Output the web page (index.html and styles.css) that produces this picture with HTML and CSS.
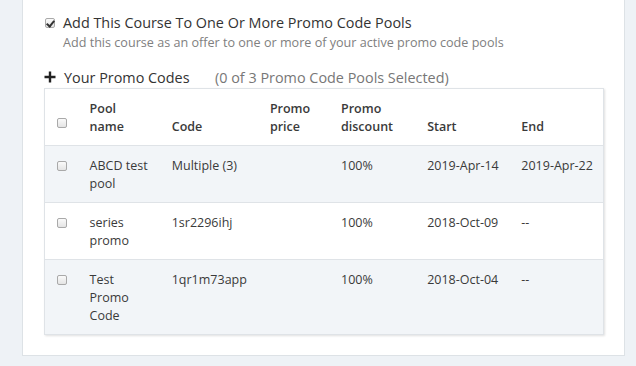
FILE: index.html
```html
<!DOCTYPE html>
<html lang="en">

<head>
  <meta charset="UTF-8">
  <meta name="viewport" content="width=device-width, initial-scale=1.0">
  <title>Promo Code Pools</title>
  <link rel="stylesheet" href="styles.css">
</head>

<body>
  <div class="panel">
    <!-- Opt-in -->
    <label class="opt-in">
      <input type="checkbox" class="check" checked>
      <span class="opt-title">Add This Course To One Or More Promo Code Pools</span>
    </label>
    <p class="opt-help">Add this course as an offer to one or more of your active promo code pools</p>

    <!-- Pool list -->
    <div class="pools-head">
      <svg class="plus" width="12" height="12" viewBox="0 0 12 12">
        <path d="M6 0.5V11.5M0.5 6H11.5" stroke="#222" stroke-width="2.4" fill="none" />
      </svg>
      <span class="pools-title">Your Promo Codes</span>
      <span class="pools-count">(0 of 3 Promo Code Pools Selected)</span>
    </div>

    <table class="pool-table">
      <colgroup>
        <col class="c-check">
        <col class="c-name">
        <col class="c-code">
        <col class="c-price">
        <col class="c-disc">
        <col class="c-start">
        <col class="c-end">
      </colgroup>
      <thead>
        <tr>
          <th class="cell-check"><input type="checkbox" class="check"></th>
          <th class="cell-name">Pool name</th>
          <th>Code</th>
          <th>Promo price</th>
          <th>Promo discount</th>
          <th>Start</th>
          <th>End</th>
        </tr>
      </thead>
      <tbody>
        <tr>
          <td class="cell-check"><input type="checkbox" class="check"></td>
          <td class="cell-name">ABCD test pool</td>
          <td>Multiple (3)</td>
          <td></td>
          <td>100%</td>
          <td>2019-Apr-14</td>
          <td>2019-Apr-22</td>
        </tr>
        <tr>
          <td class="cell-check"><input type="checkbox" class="check"></td>
          <td class="cell-name">series promo</td>
          <td>1sr2296ihj</td>
          <td></td>
          <td>100%</td>
          <td>2018-Oct-09</td>
          <td>--</td>
        </tr>
        <tr>
          <td class="cell-check"><input type="checkbox" class="check"></td>
          <td class="cell-name">Test Promo Code</td>
          <td>1qr1m73app</td>
          <td></td>
          <td>100%</td>
          <td>2018-Oct-04</td>
          <td>--</td>
        </tr>
      </tbody>
    </table>
  </div>
</body>

</html>
```

FILE: styles.css
```css
body {
  font-family: 'Open Sans', 'Noto Sans', sans-serif;
  margin: 0;
  background: #eef2f6;
  color: #333;
}

.panel {
  width: 560px;
  margin-left: 22px;
  padding: 13px 20px 20px 21px;
  background: white;
  border: 1px solid #dde2e6;
  border-top: none;
}

.check {
  appearance: none;
  -webkit-appearance: none;
  width: 10px;
  height: 10px;
  margin: 0;
  border: 1px solid #a9a9a9;
  border-radius: 2px;
  background: linear-gradient(#fafafa, #e4e4e4);
  position: relative;
}

.check:checked::after {
  content: '';
  position: absolute;
  left: 2px;
  top: 0px;
  width: 3px;
  height: 6px;
  border: solid #333;
  border-width: 0 2px 2px 0;
  transform: rotate(40deg);
}

.opt-in {
  display: flex;
  align-items: center;
  gap: 8px;
  padding-left: 1px;
}

.opt-title {
  font-size: 14.4px;
  line-height: 20px;
  color: #333;
}

.opt-help {
  margin: 1px 0 0 19px;
  font-size: 12.6px;
  line-height: 18px;
  color: #808080;
}

.pools-head {
  display: flex;
  align-items: center;
  margin-top: 14px;
  height: 22px;
  font-size: 14.4px;
}

.plus {
  margin-right: 8px;
}

.pools-title {
  color: #333;
  width: 151px;
}

.pools-count {
  color: #777;
}

.pool-table {
  width: 560px;
  table-layout: fixed;
  border-collapse: collapse;
  border: 1px solid #dfe3e7;
  box-shadow: 1px 1px 2px rgba(0, 0, 0, 0.12);
  font-size: 12.5px;
  line-height: 18px;
  color: #3a3a3a;
}

.c-check { width: 45px; }
.c-name { width: 82px; }
.c-code { width: 98px; }
.c-price { width: 71px; }
.c-disc { width: 86px; }
.c-start { width: 94px; }
.c-end { width: 82px; }

.pool-table th,
.pool-table td {
  padding: 11px 8px 9px 0;
  text-align: left;
  vertical-align: top;
}

.pool-table th {
  font-weight: 600;
  vertical-align: bottom;
  background: white;
}

.pool-table .cell-name {
  padding-right: 20px;
}

.pool-table tbody tr {
  border-top: 1px solid #dfe3e7;
}

.pool-table tbody tr:nth-child(odd) {
  background: #f2f5f8;
}

.pool-table tbody tr:nth-child(even) {
  background: white;
}

.pool-table .cell-check {
  padding-left: 12px;
}

.pool-table td.cell-check .check {
  margin-top: 4px;
}

.pool-table th.cell-check .check {
  margin-bottom: 3px;
}
```
